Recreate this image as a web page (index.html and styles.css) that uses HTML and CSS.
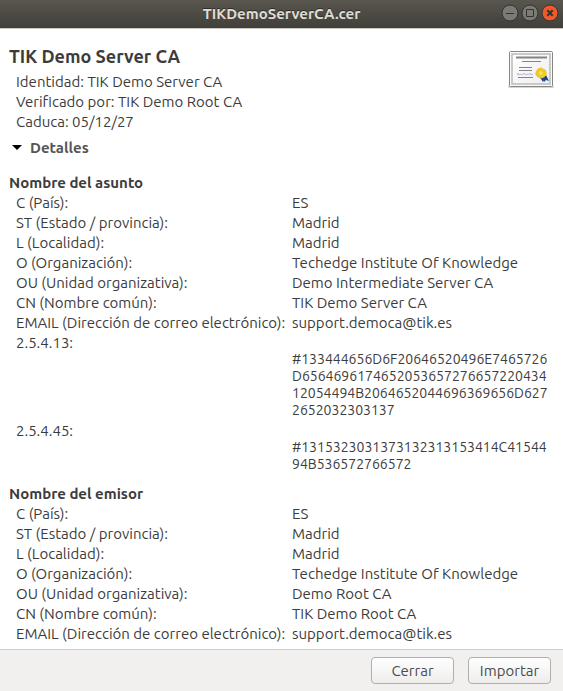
FILE: index.html
```html
<!DOCTYPE html>
<html lang="es">
<head>
<meta charset="utf-8">
<meta name="viewport" content="width=device-width, initial-scale=1">
<title>TIKDemoServerCA.cer</title>
<link rel="stylesheet" href="styles.css">
</head>
<body>
<header class="titlebar">
  <span class="titlebar-name">TIKDemoServerCA.cer</span>
  <div class="window-controls">
    <button class="control" type="button" aria-label="Minimizar">
      <svg viewBox="0 0 18 18"><circle cx="9" cy="9" r="8"/><path d="M5 9.500h8"/></svg>
    </button>
    <button class="control" type="button" aria-label="Maximizar">
      <svg viewBox="0 0 18 18"><circle cx="9" cy="9" r="8"/><path d="M5.500 5.500h7v7h-7z"/></svg>
    </button>
    <button class="control control-close" type="button" aria-label="Cerrar ventana">
      <svg viewBox="0 0 18 18"><circle cx="9" cy="9" r="8"/><path d="M6.300 6.300l5.400 5.400M11.700 6.300l-5.400 5.400"/></svg>
    </button>
  </div>
</header>

<main class="content">
  <section class="summary">
    <div class="summary-text">
      <h1 class="cert-name">TIK Demo Server CA</h1>
      <div class="facts">
        <p>Identidad: TIK Demo Server CA</p>
        <p>Verificado por: TIK Demo Root CA</p>
        <p>Caduca: 05/12/27</p>
      </div>
    </div>
    <svg class="cert-icon" viewBox="0 0 46 40" aria-hidden="true">
      <defs>
        <linearGradient id="paper" x1="0" y1="0" x2="1" y2="1">
          <stop offset="0" stop-color="#ffffff"/>
          <stop offset="1" stop-color="#eeeeee"/>
        </linearGradient>
      </defs>
      <rect x="0" y="35" width="46" height="3" rx="1.500" fill="#d5d5d5"/>
      <rect x="1.500" y="1.500" width="43" height="35" rx="1" fill="#fafafa" stroke="#858683"/>
      <rect x="4" y="4" width="38" height="30" fill="url(#paper)" stroke="#cfd0cd" stroke-width="2"/>
      <rect x="4" y="4" width="38" height="30" fill="none" stroke="#b9bab7" stroke-dasharray="1 1"/>
      <path d="M8 7.500h31" stroke="#858683" stroke-width="2"/>
      <path d="M14 11.500h19M11 17.500h13M11 20.500h13M10 27.500h15" stroke="#858683"/>
      <path d="M9 25l1-2 1 2 2-1 1 1 2-2 1 2 2-1 1 1 2-2 1 2 2-1" fill="none" stroke="#a3aed0" stroke-width=".8"/>
      <path d="M31 26l4 6 1-2 2-1-3-4zM35 25l1 7 2-2 3 1-3-6z" fill="#204a87"/>
      <path d="M33 18l2 1 2 1 1 2v3l-2 2-3 1-3-1-2-2v-3l2-3z" fill="#f2ce20" stroke="#e8c22a"/>
      <circle cx="33" cy="23" r="2.500" fill="#fbe45c" stroke="#e8c22a"/>
    </svg>
  </section>

  <details class="details" open>
    <summary class="details-toggle">
      <svg class="arrow" viewBox="0 0 10 6" aria-hidden="true"><path d="M0 0h10L5 5z"/></svg>Detalles
    </summary>

    <section class="group">
      <h2 class="group-title">Nombre del asunto</h2>
      <dl class="fields">
        <dt>C (País):</dt><dd>ES</dd>
        <dt>ST (Estado / provincia):</dt><dd>Madrid</dd>
        <dt>L (Localidad):</dt><dd>Madrid</dd>
        <dt>O (Organización):</dt><dd>Techedge Institute Of Knowledge</dd>
        <dt>OU (Unidad organizativa):</dt><dd>Demo Intermediate Server CA</dd>
        <dt>CN (Nombre común):</dt><dd>TIK Demo Server CA</dd>
        <dt>EMAIL (Dirección de correo electrónico):</dt><dd>support.democa@tik.es</dd>
        <dt>2.5.4.13:</dt><dd class="hex">#133444656D6F20646520496E7465726<br>D6564696174652053657276657220434<br>12054494B2064652044696369656D627<br>2652032303137</dd>
        <dt>2.5.4.45:</dt><dd class="hex">#1315323031373132313153414C41544<br>94B536572766572</dd>
      </dl>
    </section>

    <section class="group">
      <h2 class="group-title">Nombre del emisor</h2>
      <dl class="fields">
        <dt>C (País):</dt><dd>ES</dd>
        <dt>ST (Estado / provincia):</dt><dd>Madrid</dd>
        <dt>L (Localidad):</dt><dd>Madrid</dd>
        <dt>O (Organización):</dt><dd>Techedge Institute Of Knowledge</dd>
        <dt>OU (Unidad organizativa):</dt><dd>Demo Root CA</dd>
        <dt>CN (Nombre común):</dt><dd>TIK Demo Root CA</dd>
        <dt>EMAIL (Dirección de correo electrónico):</dt><dd>support.democa@tik.es</dd>
      </dl>
    </section>
  </details>
</main>

<footer class="actions">
  <button class="button" type="button">Cerrar</button>
  <button class="button" type="button">Importar</button>
</footer>
</body>
</html>
```
FILE: styles.css
```css
* {
  box-sizing: border-box;
}

body {
  margin: 0;
  min-height: 100vh;
  display: flex;
  flex-direction: column;
  background: #fff;
  color: #3c3c3c;
  font: 15px/17px Ubuntu, "Noto Sans", sans-serif;
}

h1, h2, p, dl, dd {
  margin: 0;
}

.titlebar {
  display: grid;
  grid-template-columns: 1fr auto 1fr;
  align-items: center;
  height: 29px;
  padding: 0 4px 2px;
  background: linear-gradient(#59564e, #403f3a);
  border-bottom: 1px solid #c9c6c2;
}

.titlebar-name {
  grid-column: 2;
  color: #dfdbd2;
  font-weight: 700;
  text-shadow: 0 -1px 0 #2e2d29;
}

.window-controls {
  display: flex;
  justify-content: flex-end;
  gap: 2px;
}

.control {
  width: 18px;
  height: 18px;
  padding: 0;
  border: 0;
  background: none;
}

.control svg {
  display: block;
  fill: #7b7a74;
  stroke: #34332f;
}

.control path {
  fill: none;
}

.control-close svg {
  fill: #ee5a2b;
}

.control-close path {
  stroke-width: 2;
}

.content {
  flex: 1;
  padding: 16px 9px 7px;
}

.summary {
  display: flex;
  justify-content: space-between;
}

.cert-name {
  font-size: 18px;
  line-height: 22px;
}

.facts {
  display: grid;
  gap: 3px;
  padding: 6px 0 0 7px;
}

.cert-icon {
  width: 46px;
  height: 40px;
  margin-top: 5px;
}

.details-toggle {
  display: flex;
  align-items: center;
  gap: 8px;
  margin-top: 9px;
  padding-left: 3px;
  color: #555;
  font-weight: 700;
  list-style: none;
}

.arrow {
  width: 10px;
  height: 6px;
  fill: #000;
}

.details:not([open]) .arrow {
  transform: rotate(-90deg);
}

.group {
  margin-top: 12px;
}

.details-toggle + .group {
  margin-top: 18px;
}

.group-title {
  font-size: 15px;
  line-height: 17px;
}

.fields {
  display: grid;
  grid-template-columns: 276px 1fr;
  row-gap: 3px;
  padding: 3px 0 0 7px;
}

.hex {
  padding-top: 17px;
  font-size: 14px;
}

.actions {
  display: flex;
  justify-content: flex-end;
  gap: 14px;
  padding: 7px 12px;
  background: #f1f0ef;
  border-top: 1px solid #cdcdc9;
}

.button {
  min-width: 83px;
  height: 27px;
  padding: 0 8px;
  border: 1px solid #b0afad;
  border-radius: 4px;
  background: linear-gradient(#fff, #eeedec);
  color: #4c4c4c;
  font: inherit;
}
```
